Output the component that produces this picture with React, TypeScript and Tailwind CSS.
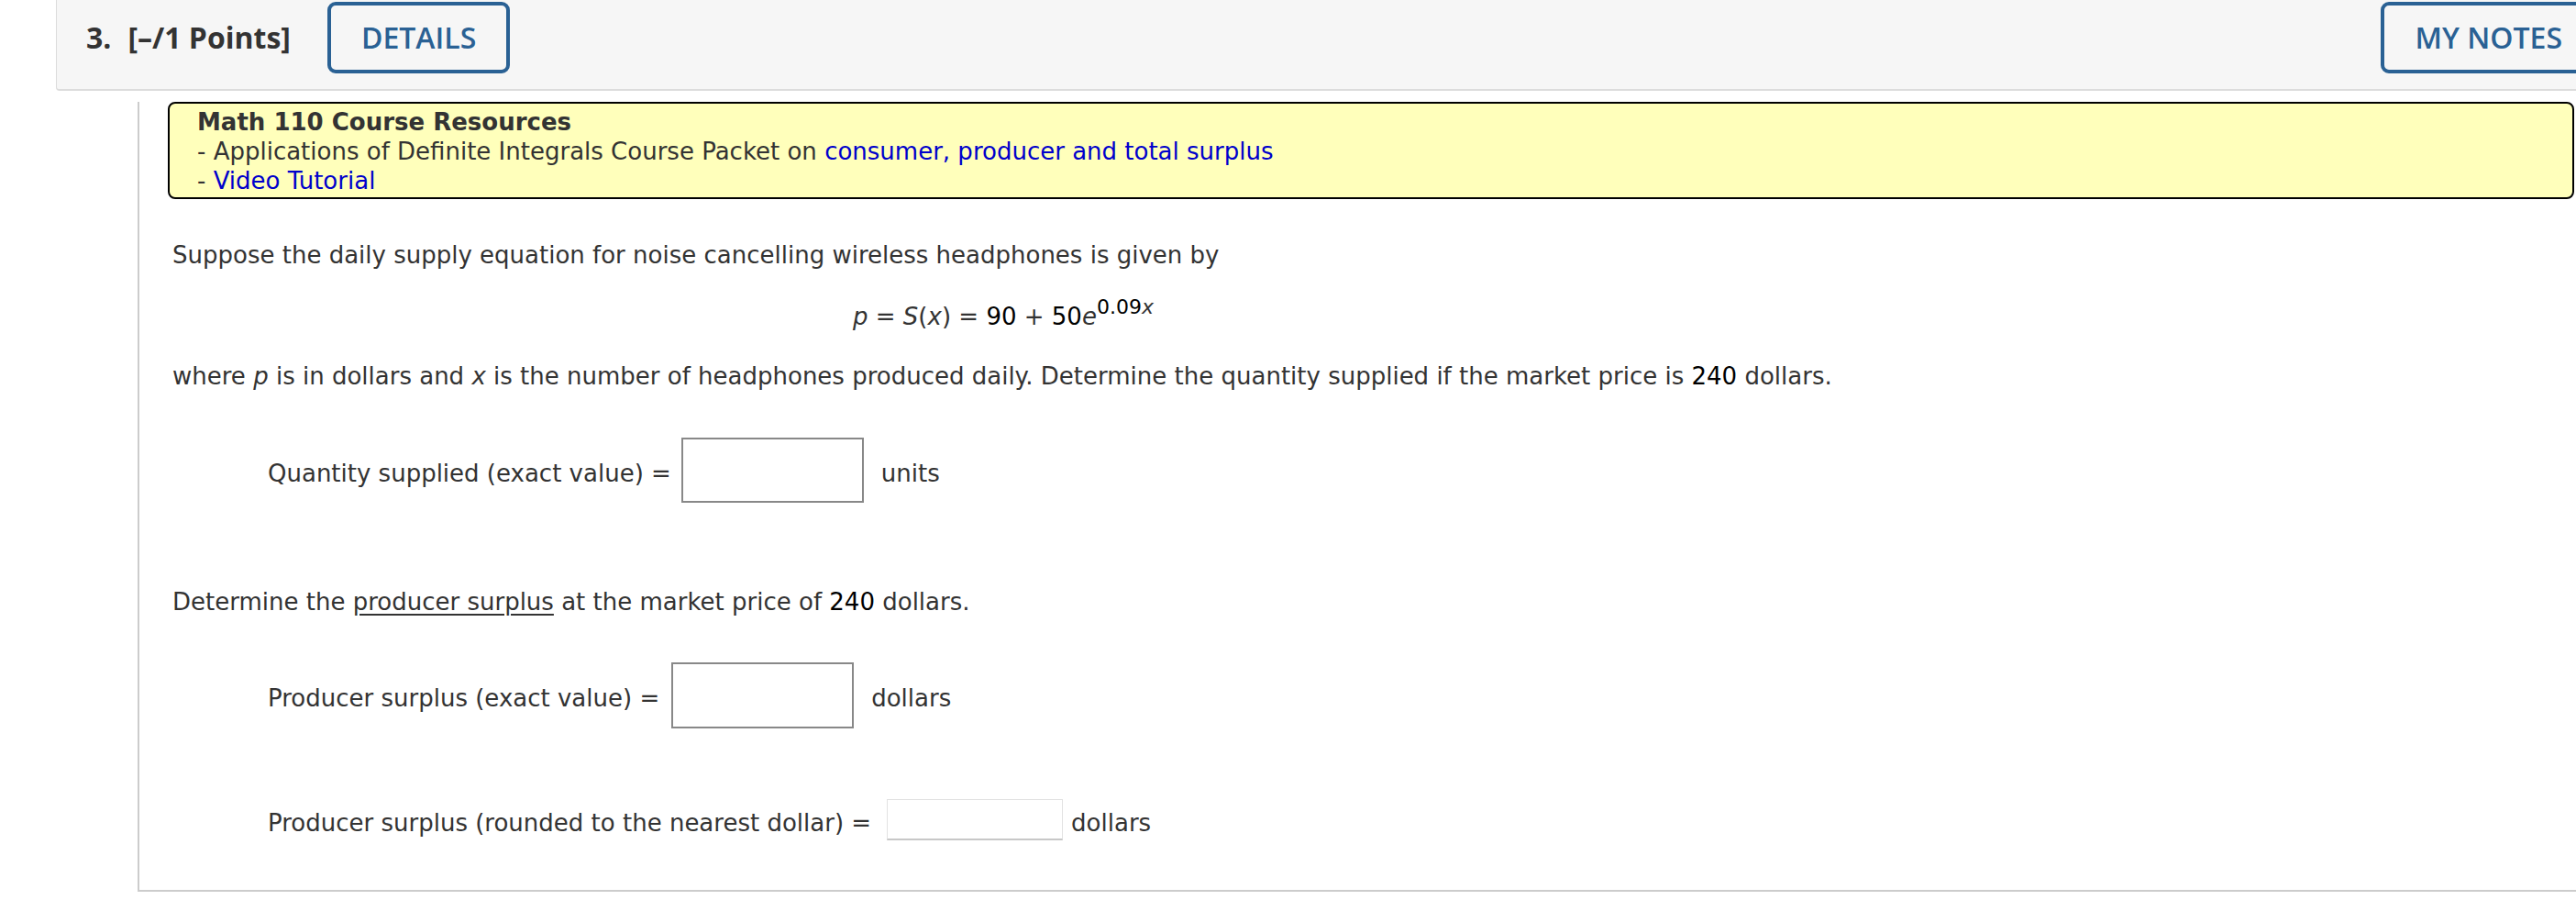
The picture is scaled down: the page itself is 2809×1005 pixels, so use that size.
import React from "react";

const body = "font-['DejaVu_Sans',Verdana,sans-serif] text-[26px] leading-[32px] text-[#333]";
const head = "font-['Open_Sans',sans-serif]";

function Num({ children }: { children: React.ReactNode }) {
  return <span className="text-black">{children}</span>;
}

function AnswerRow({
  label,
  unit,
  boxClass,
  gap,
  unitGap,
  className,
}: {
  label: string;
  unit: string;
  boxClass: string;
  gap: string;
  unitGap: string;
  className: string;
}) {
  return (
    <div className={`flex items-center pl-[109px] ${className}`}>
      <span className="pt-[6px]">{label}</span>
      <span className={`${gap} ${boxClass} bg-white`} />
      <span className={`pt-[6px] ${unitGap}`}>{unit}</span>
    </div>
  );
}

export default function App() {
  return (
    <div className={`w-[2809px] h-[1005px] overflow-hidden bg-white ${body}`}>
      <div className="ml-[61px] w-[2800px]">
        {/* question header */}
        <header className="h-[99px] bg-[#f6f6f6] border-l border-b-2 border-[#dcdcdc] rounded-bl-[4px] flex items-start pt-[2px] pl-[32px] pr-[30px]">
          <div className={`${head} h-[78px] flex items-center font-bold text-[32px] text-[#333]`}>
            <span>3.</span>
            <span className="ml-[18px]">[–/1 Points]</span>
          </div>
          <button
            type="button"
            className={`${head} ml-[40px] h-[78px] px-[33px] border-4 border-[#2a6194] rounded-[9px] text-[32px] font-semibold text-[#2a6194]`}
          >
            DETAILS
          </button>
          <button
            type="button"
            className={`${head} ml-auto h-[78px] px-[33px] border-4 border-[#2a6194] rounded-[9px] text-[32px] font-semibold text-[#2a6194]`}
          >
            MY NOTES
          </button>
        </header>

        {/* question body */}
        <div className="ml-[89px] border-l-2 border-b-2 border-[#cccccc] pl-[31px] pr-[54px] pb-[54px]">
          <div className="mt-[12px] border-2 border-black rounded-[8px] bg-[#ffffbb] pl-[30px] pt-[4px] pb-[2px]">
            <div className="font-bold">Math 110 Course Resources</div>
            <div>
              - Applications of Definite Integrals Course Packet on{" "}
              <a className="text-[#0000cc]">consumer, producer and total surplus</a>
            </div>
            <div>
              - <a className="text-[#0000cc]">Video Tutorial</a>
            </div>
          </div>

          <p className="mt-[45px] pl-[5px]">
            Suppose the daily supply equation for noise cancelling wireless headphones is given by
          </p>

          <p className="mt-[35px] pl-[747px] whitespace-nowrap">
            <i>p</i> = <i>S</i>(<i>x</i>) = <Num>90</Num> + <Num>50</Num>
            <i>e</i>
            <span className="relative -top-[12px] text-[22px] leading-none">
              <Num>0.09</Num>
              <i>x</i>
            </span>
          </p>

          <p className="mt-[33px] pl-[5px]">
            where <i>p</i> is in dollars and <i>x</i> is the number of headphones produced daily. Determine the
            quantity supplied if the market price is <Num>240</Num> dollars.
          </p>

          <AnswerRow
            className="mt-[51px]"
            label="Quantity supplied (exact value) ="
            unit="units"
            gap="ml-[11px]"
            unitGap="ml-[19px]"
            boxClass="w-[199px] h-[71px] border-2 border-[#888]"
          />

          <p className="mt-[92px] pl-[5px]">
            Determine the <span className="underline underline-offset-[4px]">producer surplus</span> at the
            market price of <Num>240</Num> dollars.
          </p>

          <AnswerRow
            className="mt-[50px]"
            label="Producer surplus (exact value) ="
            unit="dollars"
            gap="ml-[13px]"
            unitGap="ml-[19px]"
            boxClass="w-[199px] h-[72px] border-2 border-[#888]"
          />

          <AnswerRow
            className="mt-[77px]"
            label="Producer surplus (rounded to the nearest dollar) ="
            unit="dollars"
            gap="ml-[17px]"
            unitGap="ml-[9px]"
            boxClass="w-[192px] h-[45px] border border-[#e2e2e2] border-b-2 border-b-[#c8c8c8]"
          />
        </div>
      </div>
    </div>
  );
}
